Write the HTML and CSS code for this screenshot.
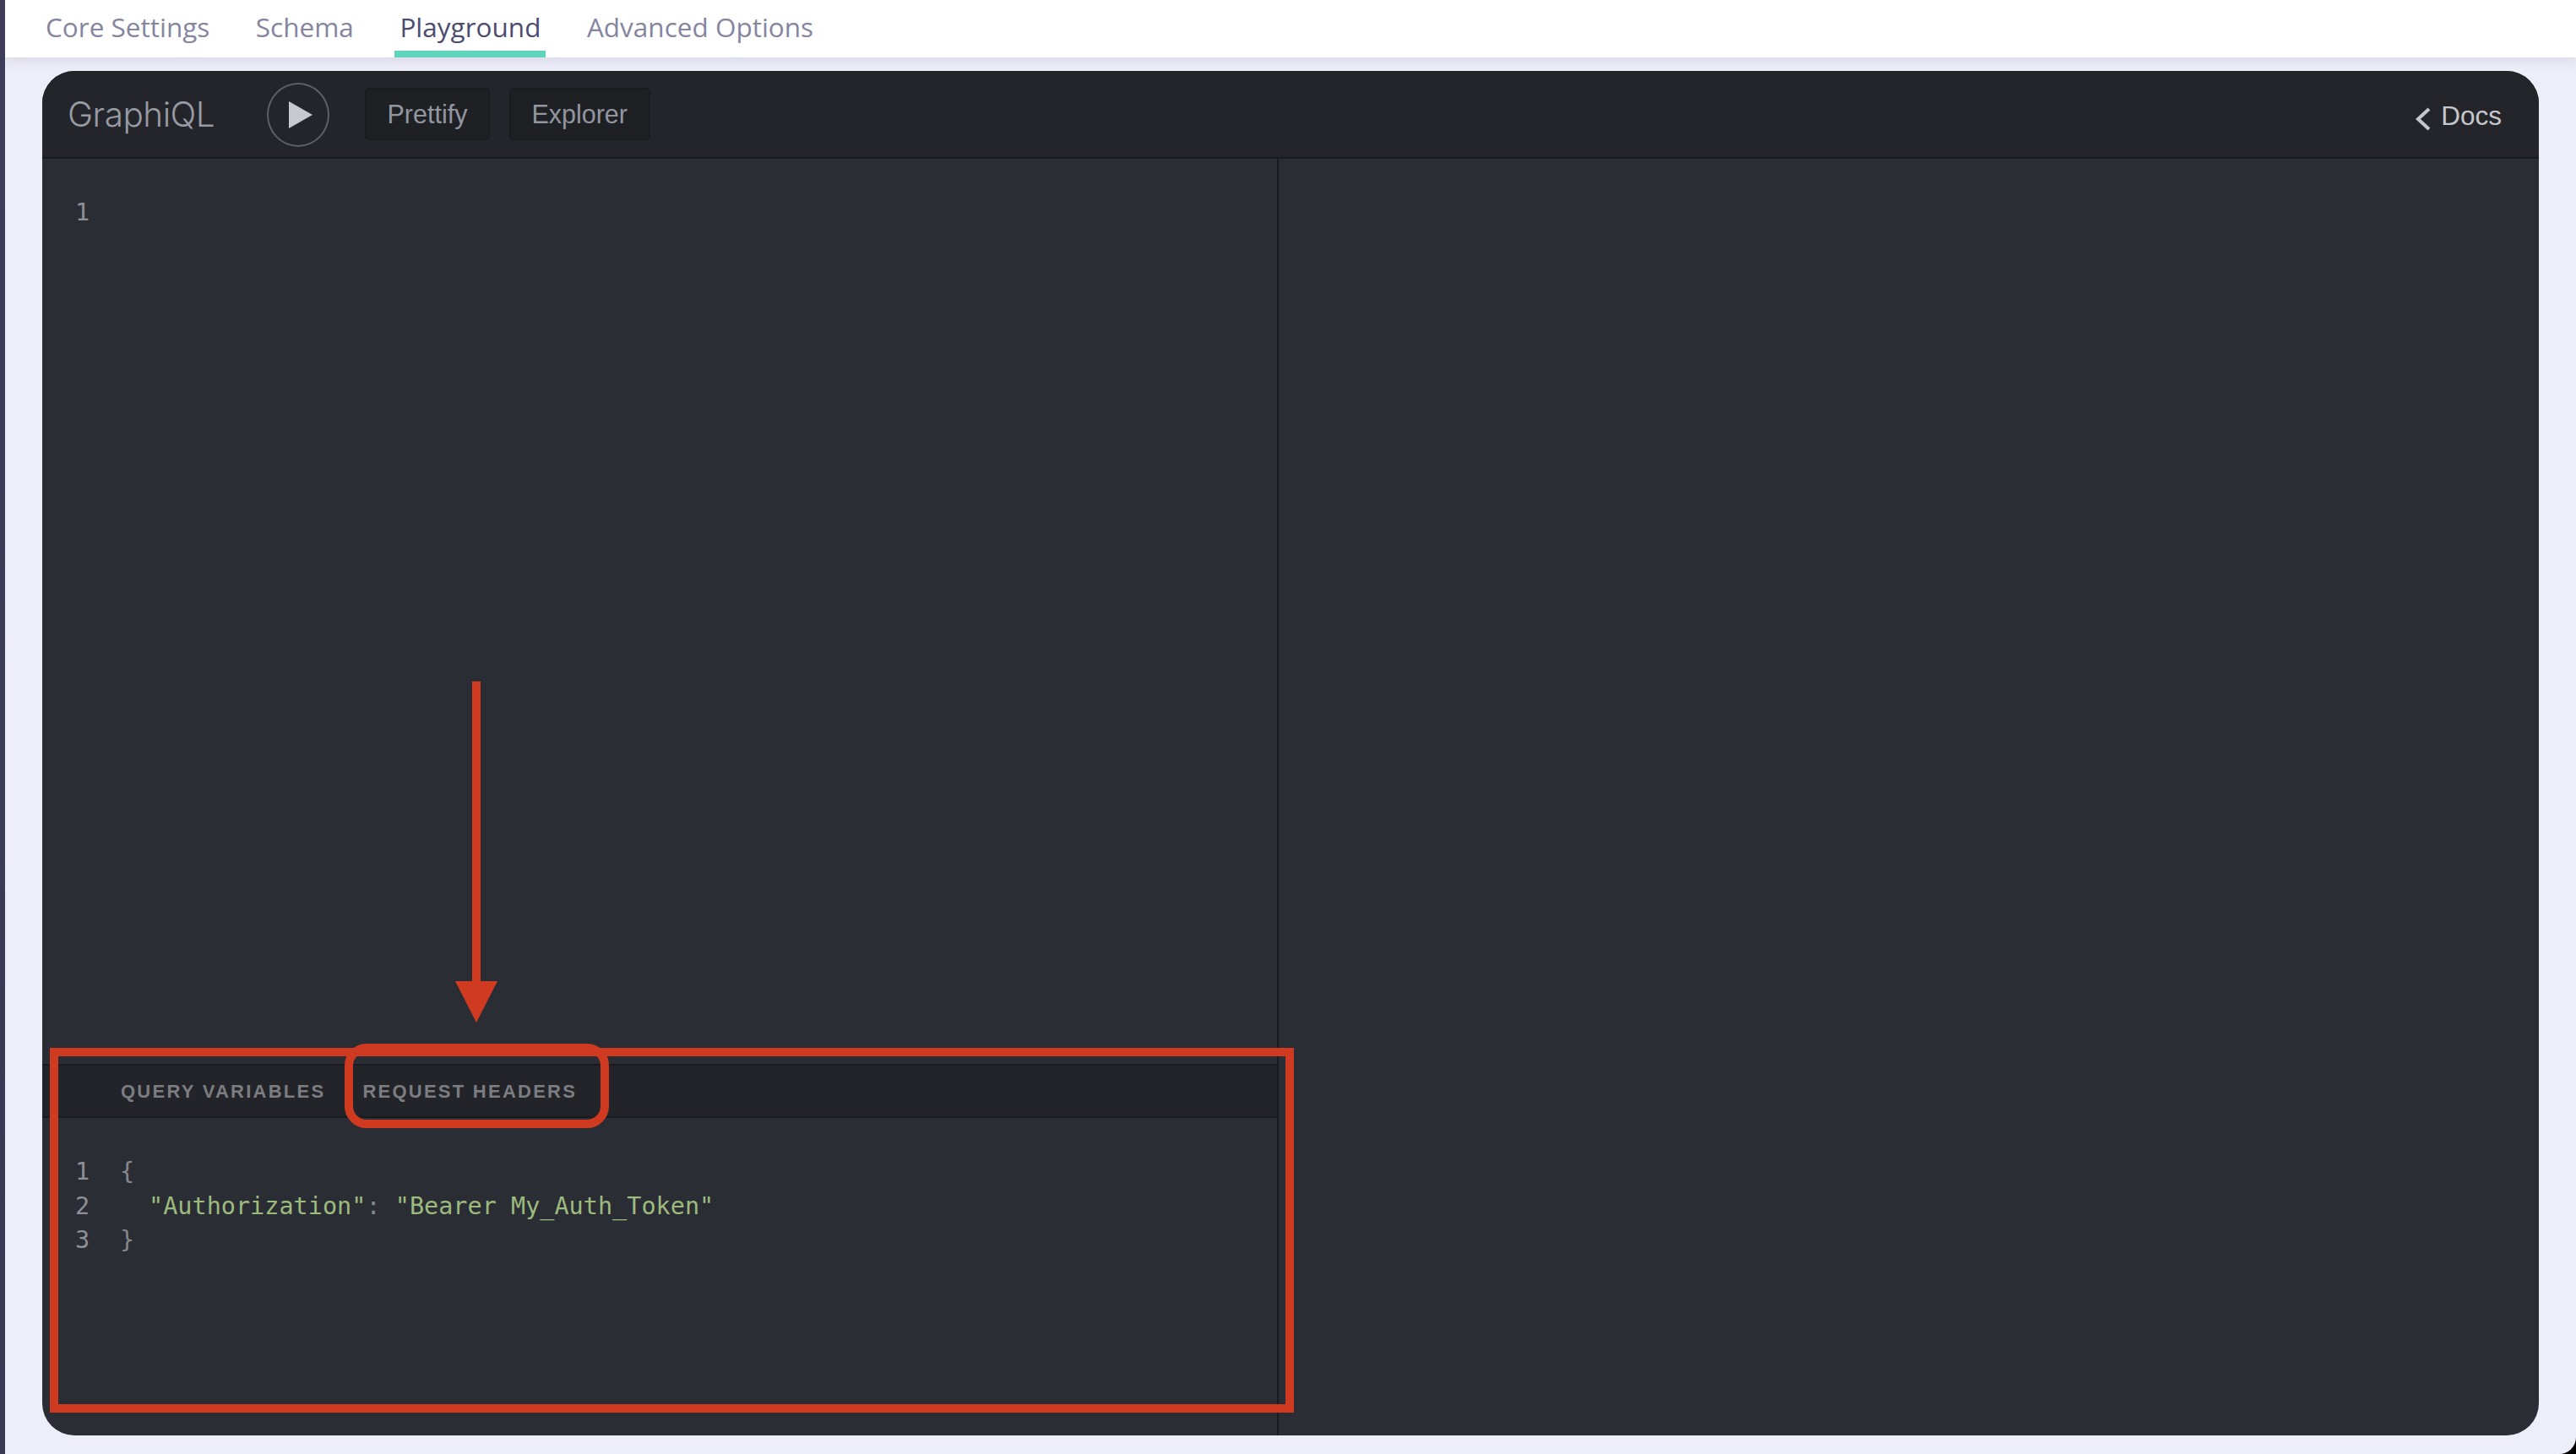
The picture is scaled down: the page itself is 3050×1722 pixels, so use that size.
FILE: index.html
```html
<!DOCTYPE html>
<html lang="en">
<head>
<meta charset="utf-8">
<title>Playground</title>
<link rel="stylesheet" href="styles.css">
</head>
<body>
<div class="app">
  <div class="rail"></div>
  <main class="main">
    <nav class="tabs">
      <a class="tab">Core Settings</a>
      <a class="tab">Schema</a>
      <a class="tab active">Playground</a>
      <a class="tab">Advanced Options</a>
    </nav>
    <div class="content">
      <section class="graphiql">
        <header class="toolbar">
          <div class="logo">GraphiQL</div>
          <button class="run" aria-label="Run">
            <svg class="run-icon" viewBox="0 0 28 32"><path d="M0 0L28 16L0 32Z"/></svg>
          </button>
          <button class="tool">Prettify</button>
          <button class="tool">Explorer</button>
          <div class="docs">
            <svg class="chevron" viewBox="0 0 18 28"><path d="M16 2L3 14L16 26"/></svg>
            <span>Docs</span>
          </div>
        </header>
        <div class="panes">
          <div class="left">
            <div class="editor">
              <div class="code-line"><span class="gutter">1</span></div>
            </div>
            <div class="vars-bar">
              <span class="vars-tab">QUERY VARIABLES</span>
              <span class="vars-tab">REQUEST HEADERS</span>
            </div>
            <div class="vars-editor">
              <div class="code-line"><span class="gutter">1</span><span class="punct">{</span></div>
              <div class="code-line"><span class="gutter">2</span><span class="str indent">"Authorization"</span><span class="punct">: </span><span class="str">"Bearer My_Auth_Token"</span></div>
              <div class="code-line"><span class="gutter">3</span><span class="punct">}</span></div>
            </div>
          </div>
          <div class="right"></div>
        </div>
      </section>
    </div>
  </main>
  <div class="mark-box"></div>
  <div class="mark-tab"></div>
  <svg class="mark-arrow" viewBox="0 0 50 404"><path d="M20 0H30V355H50L25 404L0 355H20Z"/></svg>
</div>
</body>
</html>
```
FILE: styles.css
```css
* { box-sizing: border-box; }
html, body { margin: 0; height: 100%; background: #000; overflow: hidden; }
.app {
  position: relative;
  display: flex;
  width: 3050px;
  height: 1722px;
  background: #edeef8;
  border-bottom-right-radius: 20px;
  overflow: hidden;
}
.rail { width: 6px; flex: none; background: linear-gradient(#3f3d5a, #3a3955); }
.main { flex: 1; display: flex; flex-direction: column; min-width: 0; }
.tabs {
  height: 68px;
  flex: none;
  display: flex;
  gap: 42.5px;
  padding-left: 42px;
  background: #fff;
  box-shadow: 0 2px 14px rgba(70, 70, 110, .16);
  font: 400 31.5px "Open Sans", sans-serif;
  color: #85859f;
  position: relative;
}
.tab { padding: 9px 6px 0; line-height: 46px; height: 68px; }
.tab.active { color: #4c4c70; border-bottom: 8px solid #5fd6bc; }
.content { flex: 1; padding: 16px 44px 22px 44px; min-height: 0; }
.graphiql {
  height: 100%;
  border-radius: 38px;
  overflow: hidden;
  background: #2b2d35;
  display: flex;
  flex-direction: column;
}
.toolbar {
  height: 104px;
  flex: none;
  display: flex;
  align-items: center;
  padding: 0 44px 0 30px;
  background: #23252a;
  border-bottom: 2px solid #191b1f;
  font-family: "Liberation Sans", Arial, sans-serif;
}
.logo { font-size: 40.5px; color: #989ba4; width: 236px; font-family: "Inter", "Liberation Sans", sans-serif; font-weight: 300; letter-spacing: -.5px; margin-top: 1px; }
.run {
  width: 74px; height: 76px; padding: 0 0 0 6px;
  border: 2px solid #5d6166; border-radius: 50%;
  background: transparent;
  display: flex; align-items: center; justify-content: center;
  margin: 2px 42px 0 0;
}
.run-icon { width: 28px; height: 32px; fill: #c8c9d0; }
.tool {
  height: 62px;
  padding: 0 24.5px;
  margin-right: 23px;
  background: #1e2024;
  border: 2px solid #1a1c20;
  border-radius: 5px;
  color: #9396a0;
  font: 400 30.5px "Liberation Sans", Arial, sans-serif;
}
.docs { margin-left: auto; display: flex; align-items: center; gap: 12px; color: #c6c7cb; font-size: 31.5px; margin-top: 5px; }
.chevron { width: 18px; height: 28px; fill: none; stroke: #c6c7cb; stroke-width: 4; margin-top: 7px; }
.panes { flex: 1; display: flex; min-height: 0; }
.left { width: 1464px; flex: none; display: flex; flex-direction: column; border-right: 2px solid #191b1f; }
.right { flex: 1; }
.editor { flex: 1; padding-top: 44px; }
.code-line {
  display: flex;
  height: 40.5px;
  font: 28.5px/40.5px "DejaVu Sans Mono", monospace;
  white-space: pre;
}
.gutter { width: 92px; padding-left: 39px; flex: none; color: #8e9094; }
.punct { color: #85878c; }
.str { color: #9cbb7d; }
.indent { margin-left: 34px; }
.vars-bar {
  height: 64px;
  flex: none;
  display: flex;
  align-items: center;
  gap: 44px;
  padding-left: 93px;
  background: #22242a;
  border-top: 2px solid #191b1f;
  border-bottom: 2px solid #191b1f;
}
.vars-tab { font: 700 22px "Liberation Sans", Arial, sans-serif; letter-spacing: 2.25px; color: #7c7d80; position: relative; top: 1px; }
.vars-editor { height: 376px; flex: none; padding-top: 44px; }
.mark-box { position: absolute; left: 59px; top: 1241px; width: 1473px; height: 432px; border: 10px solid #d03a20; }
.mark-tab { position: absolute; left: 408px; top: 1236px; width: 313px; height: 100px; border: 10px solid #d03a20; border-radius: 26px; }
.mark-arrow { position: absolute; left: 539px; top: 807px; width: 50px; height: 404px; fill: #d03a20; }
```
